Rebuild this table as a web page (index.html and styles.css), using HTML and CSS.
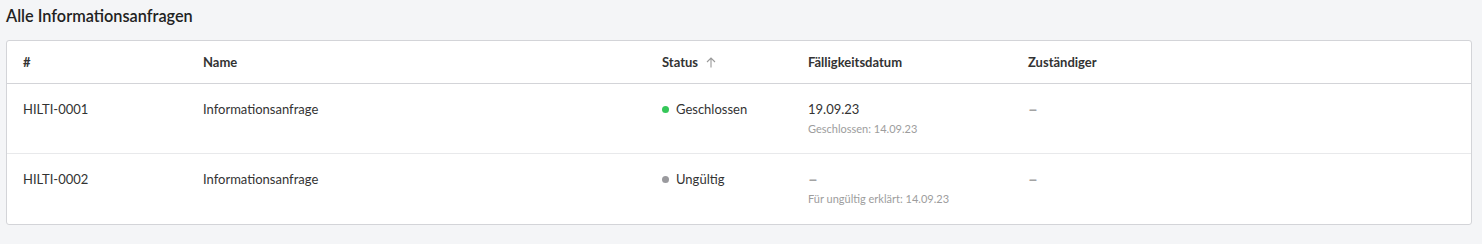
FILE: index.html
```html
<!DOCTYPE html>
<html lang="de">
<head>
<meta charset="utf-8">
<link rel="stylesheet" href="styles.css">
</head>
<body>
<h2 class="title">Alle Informationsanfragen</h2>
<div class="card">
  <div class="row head">
    <div>#</div>
    <div>Name</div>
    <div class="sort">Status <svg width="10" height="11" viewBox="0 0 10 11"><path d="M5 10.5V1M1 5l4-4 4 4" fill="none" stroke="#9a9a9a" stroke-width="1.1"/></svg></div>
    <div>Fälligkeitsdatum</div>
    <div>Zuständiger</div>
  </div>
  <div class="row">
    <div>HILTI-0001</div>
    <div>Informationsanfrage</div>
    <div class="status"><span class="dot green"></span>Geschlossen</div>
    <div class="date"><div>19.09.23</div><div class="sub">Geschlossen: 14.09.23</div></div>
    <div><span class="dash">–</span></div>
  </div>
  <div class="row last">
    <div>HILTI-0002</div>
    <div>Informationsanfrage</div>
    <div class="status"><span class="dot grey"></span>Ungültig</div>
    <div class="date"><div><span class="dash">–</span></div><div class="sub">Für ungültig erklärt: 14.09.23</div></div>
    <div><span class="dash">–</span></div>
  </div>
</div>
</body>
</html>
```
FILE: styles.css
```css
html, body { margin: 0; }
body {
  background: #f4f5f7;
  font-family: Lato, "Open Sans", sans-serif;
  color: #333;
  padding: 6px 10px 0 6px;
}
.title {
  margin: 0 0 14px 0;
  font-size: 16.3px;
  font-weight: 600;
  line-height: 20px;
  color: #222;
}
.card {
  background: #fff;
  border: 1px solid #d3d4d8;
  border-radius: 3px;
}
.row {
  display: grid;
  grid-template-columns: 180px 459px 146px 220px 1fr;
  padding: 16px 16px 16px 16px;
  font-size: 13px;
  line-height: 18px;
  min-height: 37px;
  border-top: 1px solid #e8e9eb;
}
.row.last { padding-bottom: 17px; }
.row.head {
  border-top: none;
  border-bottom: 1px solid #d3d4d8;
  font-weight: 700;
  padding: 12px 16px 12px 16px;
  min-height: 0;
  color: #333;
}
.row.head + .row { border-top: none; }
.sort { display: flex; align-items: center; gap: 8px; }
.status { display: flex; align-items: flex-start; }
.dot {
  width: 7px; height: 7px; border-radius: 50%;
  margin: 6px 7px 0 0;
  flex: none;
}
.green { background: #35c759; }
.grey { background: #9a9a9e; }
.sub {
  font-size: 11px;
  color: #9d9d9d;
  line-height: 16px;
  margin-top: 3px;
}
.dash {
  color: #a3a3a3;
  font-size: 17px;
  font-weight: 700;
  display: inline-block;
  vertical-align: top;
  line-height: 17px;
}
```
